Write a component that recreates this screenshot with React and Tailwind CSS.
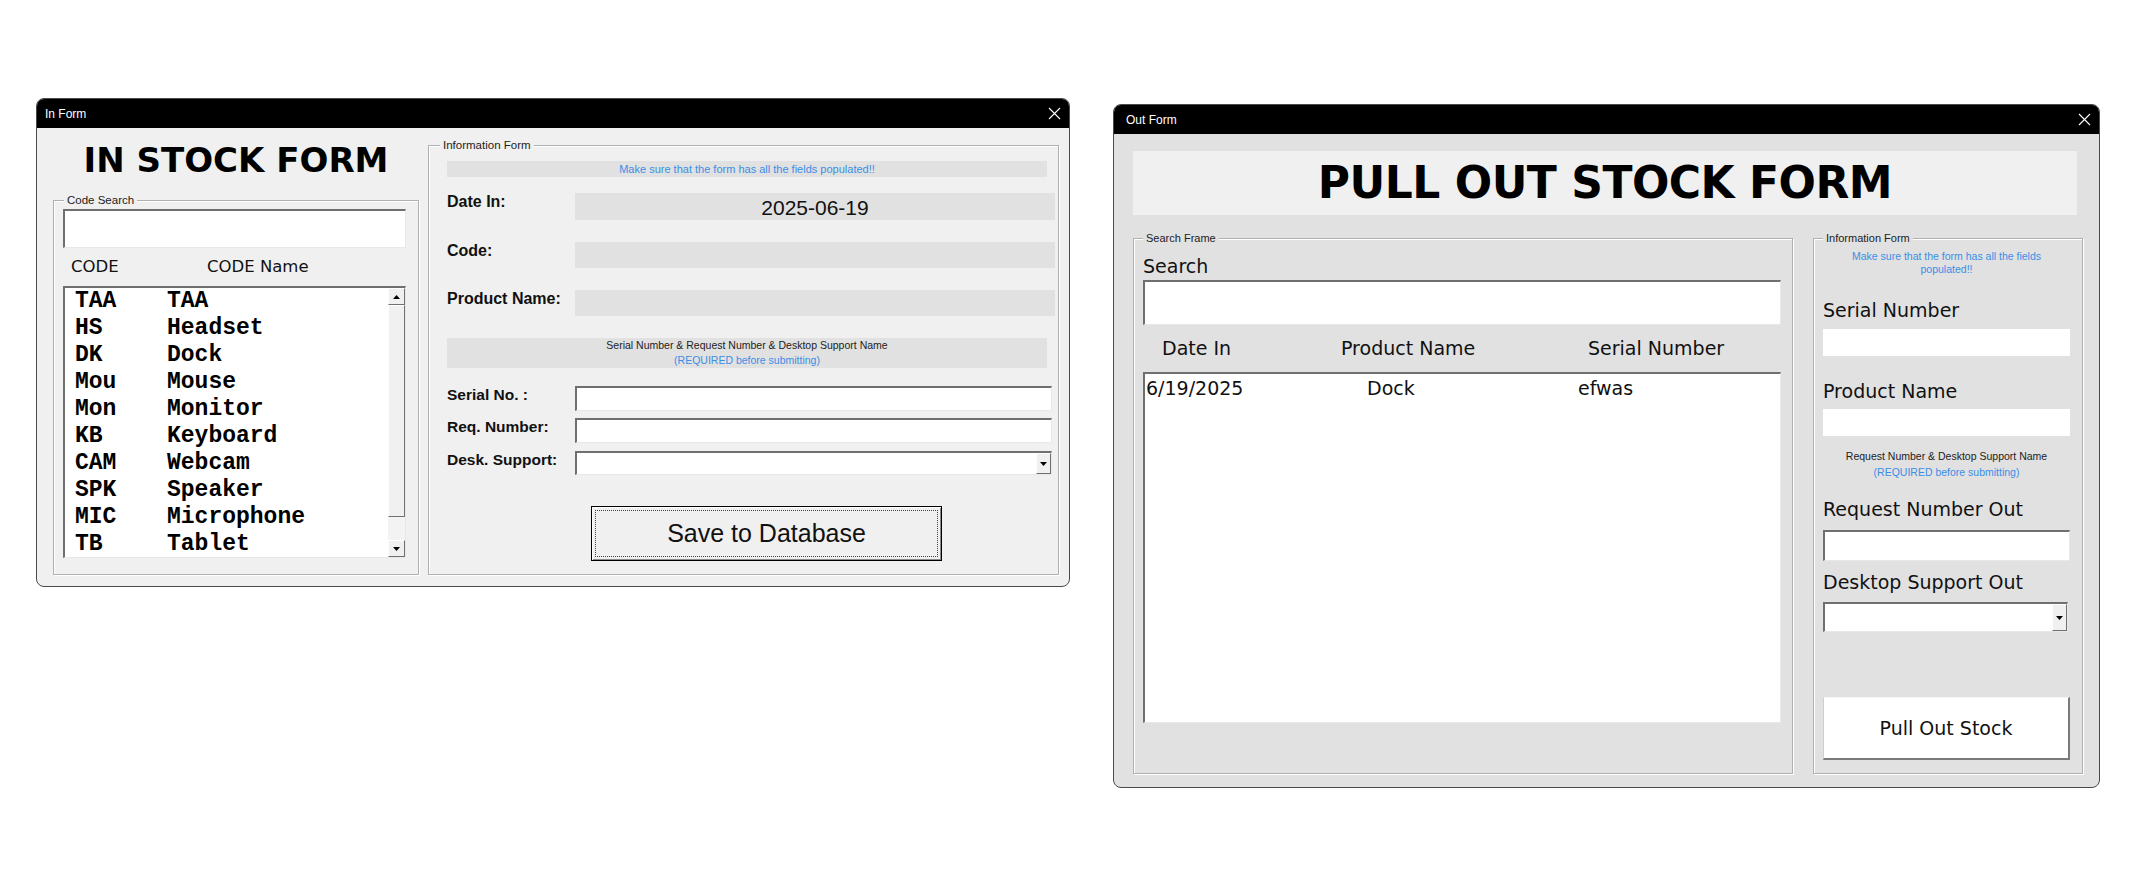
import React from 'react';

const codes = [
    ['TAA', 'TAA'],
    ['HS', 'Headset'],
    ['DK', 'Dock'],
    ['Mou', 'Mouse'],
    ['Mon', 'Monitor'],
    ['KB', 'Keyboard'],
    ['CAM', 'Webcam'],
    ['SPK', 'Speaker'],
    ['MIC', 'Microphone'],
    ['TB', 'Tablet'],
];

const sunken =
    'border-t-2 border-l-2 border-b border-r border-t-[#6f6f6f] border-l-[#6f6f6f] border-b-[#e8e8e8] border-r-[#e8e8e8] bg-white';
const raised =
    'border border-t-[#ffffff] border-l-[#ffffff] border-b-[#707070] border-r-[#707070] bg-[#f0f0f0]';

function CloseX() {
    return (
        <svg width="13" height="13" viewBox="0 0 13 13">
            <path d="M1 1L12 12M12 1L1 12" stroke="#fff" strokeWidth="1.1" />
        </svg>
    );
}

function Arrow({ up }) {
    return (
        <svg width="7" height="4" viewBox="0 0 7 4">
            <path d={up ? 'M0 4H7L3.5 0Z' : 'M0 0H7L3.5 4Z'} fill="#000" />
        </svg>
    );
}

function TitleBar({ title, pad }) {
    return (
        <div className={'h-[29px] bg-black flex items-center justify-between text-white text-[12px] pr-[8px] ' + pad}>
            <span>{title}</span>
            <CloseX />
        </div>
    );
}

function GroupBox({ label, labelClass, className, children }) {
    return (
        <div
            className={
                'relative border border-[#b0b0b0] shadow-[inset_1px_1px_0_#ffffff,1px_1px_0_#ffffff] ' + className
            }
        >
            <span className={'absolute -top-[8px] px-[3px] leading-[14px] text-[#222]  ' + labelClass}>{label}</span>
            {children}
        </div>
    );
}

function DropButton() {
    return (
        <div className={'w-[15px] h-full flex items-center justify-center ' + raised}>
            <Arrow />
        </div>
    );
}

function InForm() {
    return (
        <div className="w-[1034px] h-[489px] flex flex-col rounded-lg overflow-hidden border border-[#4a4a4a] bg-[#f0f0f0]">
            <TitleBar title="In Form" pad="pl-[8px]" />
            <div className="flex flex-1 pl-[16px] pr-[10px]">
                {/* left column */}
                <div className="w-[366px] flex flex-col">
                    <div className="h-[72px] flex items-center justify-center pb-[9px]">
                        <h1 className="font-['DejaVu_Sans',sans-serif] font-bold text-[34px] leading-none text-black">
                            IN STOCK FORM
                        </h1>
                    </div>
                    <GroupBox
                        label="Code Search"
                        labelClass="left-[10px] bg-[#f0f0f0] text-[11.5px]"
                        className="h-[375px] pl-[9px] pr-[12px] flex flex-col"
                    >
                        <div className={'mt-[8px] h-[39px] ' + sunken} />
                        <div className="h-[38px] flex items-center pl-[8px] font-['DejaVu_Sans',sans-serif] text-[16.5px] text-[#111]">
                            <span className="w-[136px]">CODE</span>
                            <span>CODE Name</span>
                        </div>
                        <div className={'h-[272px] flex overflow-hidden ' + sunken}>
                            <div className="flex-1 pl-[10px] font-['Liberation_Mono','Courier_New',monospace] font-bold text-[23px] leading-[27px] text-black">
                                {codes.map(([c, n]) => (
                                    <div key={c} className="flex h-[27px]">
                                        <span className="w-[92px]">{c}</span>
                                        <span>{n}</span>
                                    </div>
                                ))}
                            </div>
                            <div className="w-[17px] flex flex-col">
                                <div className={'h-[17px] flex items-center justify-center ' + raised}>
                                    <Arrow up />
                                </div>
                                <div className={'flex-1 ' + raised} />
                                <div className="h-[23px] bg-[#f3f3f3]" />
                                <div className={'h-[17px] flex items-center justify-center ' + raised}>
                                    <Arrow />
                                </div>
                            </div>
                        </div>
                    </GroupBox>
                </div>

                {/* right column */}
                <div className="ml-[9px] pt-[17px]">
                    <GroupBox
                        label="Information Form"
                        labelClass="left-[11px] bg-[#f0f0f0] text-[11.5px]"
                        className="h-[430px] w-[631px] pl-[18px]"
                    >
                        <div className="mt-[15px] h-[16px] w-[600px] bg-[#e1e1e1] flex items-center justify-center text-[11px] text-[#3a8ee6]">
                            Make sure that the form has all the fields populated!!
                        </div>
                        <div className="mt-[16px] flex items-start">
                            <div className="w-[128px] leading-[18px] font-bold text-[16px] text-[#111]">Date In:</div>
                            <div className="w-[480px] h-[27px] bg-[#e1e1e1] flex items-center justify-center text-[21px] text-[#111] pt-[2px]">
                                2025-06-19
                            </div>
                        </div>
                        <div className="mt-[22px] flex items-start">
                            <div className="w-[128px] leading-[18px] font-bold text-[16px] text-[#111]">Code:</div>
                            <div className="w-[480px] h-[26px] bg-[#e1e1e1]" />
                        </div>
                        <div className="mt-[22px] flex items-start">
                            <div className="w-[128px] leading-[18px] font-bold text-[16px] text-[#111]">Product Name:</div>
                            <div className="w-[480px] h-[26px] bg-[#e1e1e1]" />
                        </div>
                        <div className="mt-[22px] h-[30px] w-[600px] bg-[#e1e1e1] flex flex-col items-center justify-center text-[10.5px] leading-[15px]">
                            <span className="text-[#222]">Serial Number &amp; Request Number &amp; Desktop Support Name</span>
                            <span className="text-[#3a8ee6]">(REQUIRED before submitting)</span>
                        </div>
                        <div className="mt-[18px] flex items-start">
                            <div className="w-[128px] leading-[18px] font-bold text-[15.5px] text-[#111]">Serial No. :</div>
                            <div className={'w-[477px] h-[25px] ' + sunken} />
                        </div>
                        <div className="mt-[7px] flex items-start">
                            <div className="w-[128px] leading-[18px] font-bold text-[15.5px] text-[#111]">Req. Number:</div>
                            <div className={'w-[477px] h-[25px] ' + sunken} />
                        </div>
                        <div className="mt-[8px] flex items-start">
                            <div className="w-[128px] leading-[18px] font-bold text-[15.5px] text-[#111]">Desk. Support:</div>
                            <div className={'w-[477px] h-[24px] flex justify-end ' + sunken}>
                                <DropButton />
                            </div>
                        </div>
                        <div className="mt-[31px] ml-[144px] w-[351px] h-[55px] border border-black bg-[#f0f0f0] shadow-[inset_1px_1px_0_#ffffff,inset_-1px_-1px_0_#8a8a8a] p-[3px]">
                            <div className="h-full border border-dotted border-[#444] flex items-center justify-center text-[25px] text-[#111]">
                                Save to Database
                            </div>
                        </div>
                    </GroupBox>
                </div>
            </div>
        </div>
    );
}

function OutForm() {
    const big = "font-['DejaVu_Sans',sans-serif] text-[19px] text-[#111]";
    return (
        <div className="mt-[6px] w-[987px] h-[684px] flex flex-col rounded-lg overflow-hidden border border-[#4a4a4a] bg-[#e1e1e1]">
            <TitleBar title="Out Form" pad="pl-[12px]" />
            <div className="flex flex-col flex-1 pl-[19px] pr-[16px] pt-[17px] pb-[13px]">
                <div className="h-[64px] w-[944px] bg-[#f0f0f0] flex items-center justify-center">
                    <h1 className="font-['DejaVu_Sans',sans-serif] font-bold text-[44px] tracking-[-0.5px] leading-none text-black">
                        PULL OUT STOCK FORM
                    </h1>
                </div>
                <div className="mt-[23px] flex flex-1 gap-[20px]">
                    <GroupBox
                        label="Search Frame"
                        labelClass="left-[9px] bg-[#e1e1e1] text-[11px]"
                        className="w-[660px] h-[536px] pl-[9px] pr-[11px] flex flex-col"
                    >
                        <div className={'pt-[17px] h-[41px] leading-[20px] ' + big}>Search</div>
                        <div className={'h-[45px] ' + sunken} />
                        <div className={'h-[47px] flex items-center ' + big}>
                            <span className="ml-[19px] w-[179px]">Date In</span>
                            <span className="w-[247px]">Product Name</span>
                            <span>Serial Number</span>
                        </div>
                        <div className={'h-[351px] ' + sunken}>
                            <div className={'mt-[2px] h-[24px] flex items-center ' + big}>
                                <span className="ml-[1px] w-[221px]">6/19/2025</span>
                                <span className="w-[211px]">Dock</span>
                                <span>efwas</span>
                            </div>
                        </div>
                    </GroupBox>

                    <GroupBox
                        label="Information Form"
                        labelClass="left-[9px] bg-[#e1e1e1] text-[11px]"
                        className="w-[270px] h-[536px] pl-[9px] pr-[12px] flex flex-col"
                    >
                        <div className="pt-[11px] text-center text-[10.5px] leading-[13px] text-[#3a8ee6]">
                            Make sure that the form has all the fields
                            <br />
                            populated!!
                        </div>
                        <div className={'mt-[23px] leading-[22px] ' + big}>Serial Number</div>
                        <div className="mt-[8px] h-[27px] bg-white" />
                        <div className={'mt-[24px] leading-[22px] ' + big}>Product Name</div>
                        <div className="mt-[7px] h-[27px] bg-white" />
                        <div className="mt-[12px] text-center text-[10.5px] leading-[16px]">
                            <div className="text-[#222]">Request Number &amp; Desktop Support Name</div>
                            <div className="text-[#3a8ee6]">(REQUIRED before submitting)</div>
                        </div>
                        <div className={'mt-[18px] leading-[22px] ' + big}>Request Number Out</div>
                        <div className={'mt-[10px] h-[31px] ' + sunken} />
                        <div className={'mt-[10px] leading-[22px] ' + big}>Desktop Support Out</div>
                        <div className={'mt-[9px] h-[30px] w-[245px] flex justify-end ' + sunken}>
                            <DropButton />
                        </div>
                        <div className="mt-[65px] h-[63px] bg-white border-t border-l border-b-2 border-r-2 border-t-[#f4f4f4] border-l-[#cfcfcf] border-b-[#7a7a7a] border-r-[#7a7a7a] flex items-center justify-center">
                            <span className={big}>Pull Out Stock</span>
                        </div>
                    </GroupBox>
                </div>
            </div>
        </div>
    );
}

export default function App() {
    return (
        <div className="w-[2150px] h-[889px] bg-white flex items-start pl-[36px] pt-[98px] gap-[43px] font-['Liberation_Sans',Arial,sans-serif]">
            <InForm />
            <OutForm />
        </div>
    );
}
